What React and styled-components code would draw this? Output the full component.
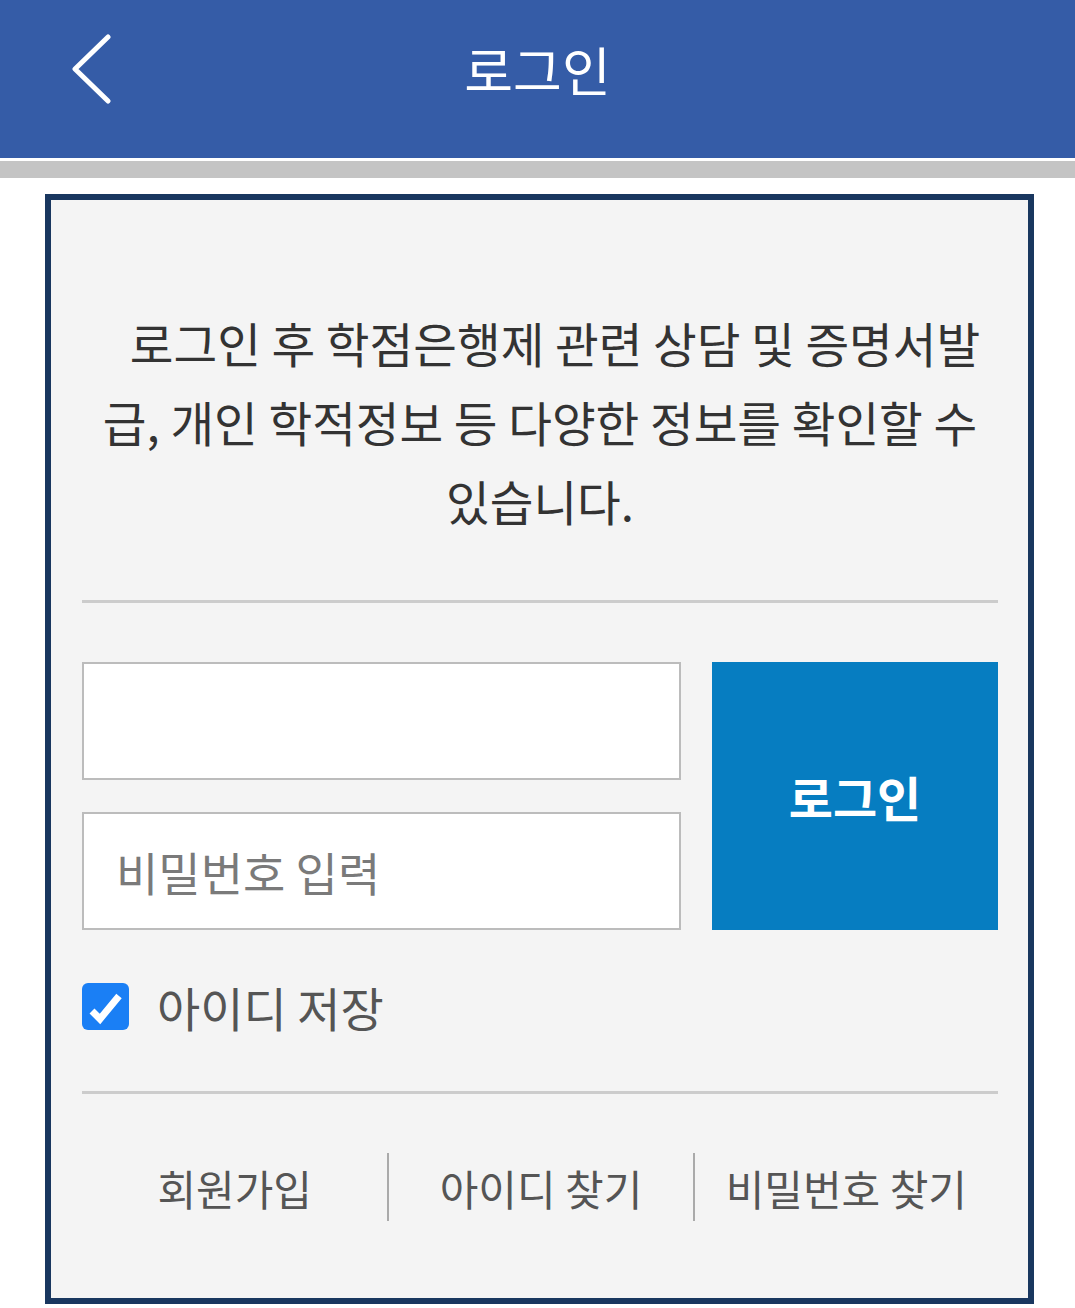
import React from 'react';
import styled, { createGlobalStyle } from 'styled-components';

const GlobalStyle = createGlobalStyle`
  body {
    margin: 0;
    background: #ffffff;
    font-family: "Noto Sans CJK KR", "Noto Sans", sans-serif;
  }
`;

const Header = styled.header`
  height: 158px;
  background-color: #355ca7;
  display: grid;
  grid-template-columns: 1fr auto 1fr;
  align-items: center;
`;

const BackButton = styled.button`
  justify-self: start;
  margin: 0 0 18px 68px;
  padding: 0;
  border: none;
  background: transparent;
  display: flex;
  cursor: pointer;
`;

const Title = styled.h1`
  margin: 0 0 20px;
  color: #ffffff;
  font-size: 53px;
  font-weight: 400;
`;

const Shade = styled.div`
  margin-top: 3px;
  height: 17px;
  background-color: #c4c4c4;
`;

const Card = styled.main`
  margin: 16px 41px 0 45px;
  border: 6px solid #19375f;
  background-color: #f4f4f4;
  padding: 0 30px 0 31px;
`;

const Intro = styled.p`
  margin: 0;
  padding-top: 103px;
  font-size: 47.5px;
  line-height: 79px;
  color: #333333;
  text-align: center;
  text-indent: 30px;
`;

const Divider = styled.hr`
  margin: ${(p) => p.$top}px 0 0;
  height: 3px;
  border: none;
  background-color: #cccccc;
`;

const LoginArea = styled.div`
  margin-top: 59px;
  display: grid;
  grid-template-columns: 599px 1fr;
  gap: 31px;
`;

const Fields = styled.div`
  display: flex;
  flex-direction: column;
  gap: 32px;
`;

const Field = styled.input`
  box-sizing: border-box;
  width: 100%;
  height: 118px;
  border: 2px solid #bcbcbc;
  background: #ffffff;
  padding: 0 0 0 32px;
  font-family: inherit;
  font-size: 46px;
  color: #333333;
  outline: none;

  &::placeholder {
    color: #7a7a7a;
  }
`;

const LoginButton = styled.button`
  border: none;
  background-color: #067dc1;
  color: #ffffff;
  font-family: inherit;
  font-size: 48px;
  font-weight: 700;
  cursor: pointer;
`;

const CheckRow = styled.label`
  margin-top: 53px;
  display: flex;
  align-items: center;
  gap: 28px;
  font-size: 47px;
  line-height: 47px;
  color: #555555;
`;

const CheckBox = styled.span`
  width: 47px;
  height: 47px;
  border-radius: 6px;
  background-color: #1a7ff5;
  display: flex;
  align-items: center;
  justify-content: center;
  flex-shrink: 0;
`;

const Links = styled.nav`
  margin-top: 59px;
  padding-bottom: 77px;
  display: grid;
  grid-template-columns: repeat(3, 1fr);
`;

const LinkItem = styled.a`
  height: 68px;
  display: flex;
  align-items: center;
  justify-content: center;
  border-left: ${(p) => (p.$first ? 'none' : '2px solid #aaaaaa')};
  font-size: 42px;
  color: #555555;
  text-decoration: none;
`;

export default function App() {
  return (
    <>
      <GlobalStyle />
      <Header>
        <BackButton aria-label="뒤로">
          <svg width="46" height="72" viewBox="0 0 46 72">
            <path
              d="M40 3 L7 35 L40 67"
              fill="none"
              stroke="#ffffff"
              strokeWidth="5"
              strokeLinecap="round"
              strokeLinejoin="round"
            />
          </svg>
        </BackButton>
        <Title>로그인</Title>
      </Header>
      <Shade />
      <Card>
        <Intro>
          로그인 후 학점은행제 관련 상담 및 증명서발
          <br />
          급, 개인 학적정보 등 다양한 정보를 확인할 수
          <br />
          있습니다.
        </Intro>
        <Divider $top={60} />
        <LoginArea>
          <Fields>
            <Field type="text" />
            <Field type="password" placeholder="비밀번호 입력" />
          </Fields>
          <LoginButton>로그인</LoginButton>
        </LoginArea>
        <CheckRow>
          <CheckBox>
            <svg width="47" height="47" viewBox="0 0 47 47">
              <path
                d="M10 28 L18 36 L37 13"
                fill="none"
                stroke="#ffffff"
                strokeWidth="7"
                strokeLinejoin="miter"
              />
            </svg>
          </CheckBox>
          아이디 저장
        </CheckRow>
        <Divider $top={61} />
        <Links>
          <LinkItem $first href="#">회원가입</LinkItem>
          <LinkItem href="#">아이디 찾기</LinkItem>
          <LinkItem href="#">비밀번호 찾기</LinkItem>
        </Links>
      </Card>
    </>
  );
}
